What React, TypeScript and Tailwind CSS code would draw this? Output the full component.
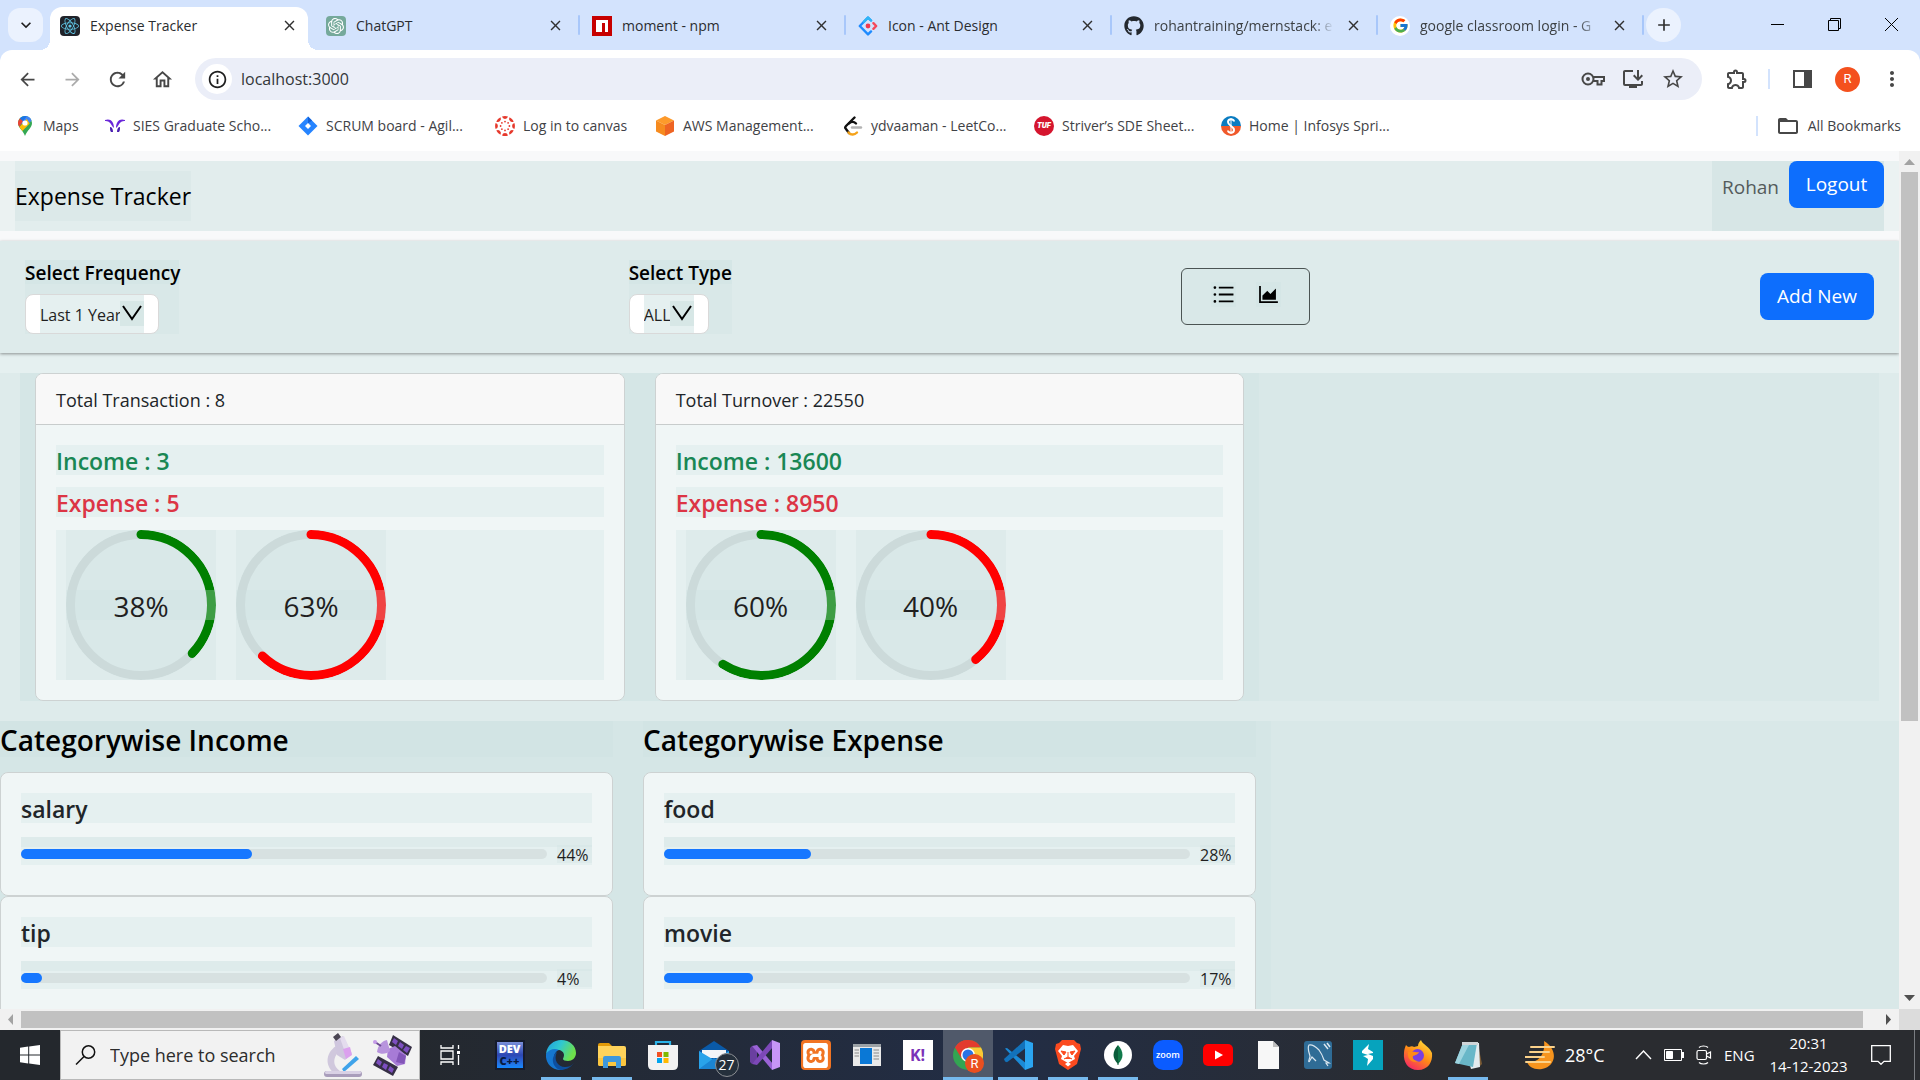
import React from "react";
import { AiOutlineUnorderedList, AiOutlineAreaChart } from "react-icons/ai";
import { FaReact, FaGithub } from "react-icons/fa";
import { FcGoogle } from "react-icons/fc";
import { SiOpenai, SiXampp } from "react-icons/si";
import {
  MdArrowBack,
  MdArrowForward,
  MdRefresh,
  MdOutlineHome,
  MdInfoOutline,
  MdStarBorder,
  MdOutlineExtension,
  MdMoreVert,
  MdFolderOpen,
  MdClose,
  MdAdd,
  MdKeyboardArrowDown,
  MdInstallDesktop,
} from "react-icons/md";

const tint = "bg-[rgba(204,226,225,0.3)]";

/* ---------- Browser icons ---------- */

function OpenAiIcon() {
  return (
    <span className="flex size-5 items-center justify-center rounded bg-[#75a99b] text-white">
      <SiOpenai size={16} />
    </span>
  );
}

function ReactIcon() {
  return (
    <span className="flex size-5 items-center justify-center rounded-sm bg-[#20232a] text-[#61c8e8]">
      <FaReact size={18} />
    </span>
  );
}

function NpmIcon() {
  return (
    <svg className="size-5" viewBox="0 0 20 20">
      <rect width="20" height="20" fill="#c70000" />
      <path d="M4 4h12v12h-3V7h-3v9H4z" fill="#fff" />
    </svg>
  );
}

function AntIcon() {
  return (
    <svg className="size-5" viewBox="0 0 20 20" fill="none" strokeWidth="2.4" strokeLinejoin="round" strokeLinecap="round">
      <path d="M13 4.5 10 1.6 1.8 10 10 18.4l3-3" stroke="#1e8bff" />
      <path d="M13 4.5 10 1.6 6 5.7" stroke="#2fb6f6" />
      <path d="m15.4 7.2 2.8 2.8-2.8 2.8" stroke="#f5485a" />
      <circle cx="10" cy="10" r="2.4" fill="#f0384f" />
    </svg>
  );
}

function GoogleIcon() {
  return (
    <span className="flex size-5 items-center justify-center rounded-full bg-white">
      <FcGoogle size={17} />
    </span>
  );
}

function MapsIcon() {
  return (
    <svg className="h-5 w-3.5" viewBox="0 0 14 20">
      <path d="M7 0a7 7 0 0 1 7 7c0 5-5 7-7 13C5 14 0 12 0 7a7 7 0 0 1 7-7z" fill="#34a853" />
      <path d="M7 0a7 7 0 0 1 6.5 4.4L7 12 1.6 5.2 7 0z" fill="#4285f4" />
      <path d="M2 2.3 5 5 1.4 11A7 7 0 0 1 2 2.3z" fill="#ea4335" />
      <path d="m1.4 11 7.3-8 3 4.6L4.4 15z" fill="#fbbc04" />
      <path d="M7 0C4.8 0 3 1 1.8 2.4L5 5l3.8-4.700z" fill="#1a73e8" />
      <circle cx="7" cy="7" r="2.6" fill="#fff" />
    </svg>
  );
}

function SiesIcon() {
  return (
    <svg className="h-4 w-5" viewBox="0 0 20 16" stroke="none" fill="#6a27d9">
      <path d="M0 2c5-2 9 1 9 8-2-1-3-5-5-6C3 3 1 3 0 3z" />
      <path d="M20 2c-5-2-9 1-9 8 2-1 3-5 5-6 1-1 3-1 4-1z" />
      <path d="M5 9c2 0 3 2 3 5H6c-1-1-1-3-1-5zM15 9c-2 0-3 2-3 5h2c1-1 1-3 1-5z" fill="#4a1fb0" />
    </svg>
  );
}

function JiraIcon() {
  return (
    <svg className="size-5" viewBox="0 0 20 20">
      <path d="m10 .5 9.5 9.5-9.5 9.5L.5 10z" fill="#2684ff" />
      <path d="m10 .5 4 4-4 3z" fill="#1560d4" />
      <path d="m10 7 3 3-3 3-3-3z" fill="#fff" />
    </svg>
  );
}

function CanvasIcon() {
  const spokes = [0, 45, 90, 135, 180, 225, 270, 315];
  return (
    <svg className="size-5" viewBox="0 0 20 20">
      {spokes.map((a) => (
        <g key={a} transform={`rotate(${a} 10 10)`} fill="#e6392c">
          <path d="M7 .6a9.500 9.500 0 0 1 6 0A3.100 3.100 0 0 1 7 .6z" />
          <circle cx="10" cy="5.600" r=".9" />
        </g>
      ))}
    </svg>
  );
}

function AwsIcon() {
  return (
    <svg className="size-5" viewBox="0 0 20 20">
      <path d="m10 0 9 4.500-9 4.500-9-4.500z" fill="#fd9a2b" />
      <path d="M1 4.500 10 9v11l-9-4.500z" fill="#f68b1f" />
      <path d="M19 4.500 10 9v11l9-4.500z" fill="#ee6423" />
    </svg>
  );
}

function LeetIcon() {
  return (
    <svg className="size-5" viewBox="0 0 20 20" fill="none" strokeWidth="2.400" strokeLinecap="round">
      <path d="M11.500 1.500 3 10c-1 1-1 2 0 3l3 4" stroke="#111" />
      <path d="M5.500 16.500c2.500 3 6 2.500 8.500 0" stroke="#f5a31a" />
      <path d="M6 7.500c2-2 5-2 7 0" stroke="#111" />
      <path d="M9 11.500h9" stroke="#b3b3b3" />
    </svg>
  );
}

function TufIcon() {
  return (
    <span className="flex size-5 items-center justify-center rounded-full bg-[#d5152e] font-['Inter'] text-[7px] font-black italic text-white">
      TUF
    </span>
  );
}

function InfosysIcon() {
  return (
    <svg className="size-5" viewBox="0 0 20 20" fill="none">
      <path d="M0 10a10 10 0 0 1 20 0z" fill="#0a7cc1" />
      <path d="M0 10a10 10 0 0 0 20 0z" fill="#f0592b" />
      <path d="M13 5.500c0-3-6-3-6 .5 0 4 6 4 6 8 0 3.500-6 3.500-6 .5" stroke="#fff" strokeWidth="2" />
      <path d="M10 2v16" stroke="#fff" strokeWidth="1" />
    </svg>
  );
}

/* ---------- Browser chrome ---------- */

const tabs = [
  { title: "Expense Tracker", icon: <ReactIcon />, active: true },
  { title: "ChatGPT", icon: <OpenAiIcon /> },
  { title: "moment - npm", icon: <NpmIcon /> },
  { title: "Icon - Ant Design", icon: <AntIcon /> },
  { title: "rohantraining/mernstack: e", icon: <FaGithub size={20} className="text-[#24292f]" />, fade: true },
  { title: "google classroom login - G", icon: <GoogleIcon />, fade: true },
];

function TabStrip() {
  return (
    <div className="flex h-[50px] items-end bg-[#d3e3fd]">
      <button aria-label="Search tabs" className="mr-[7px] mb-2 ml-2 flex h-[34px] w-[35px] shrink-0 items-center justify-center rounded-xl bg-[#ebf2fe]">
        <MdKeyboardArrowDown size={20} className="text-[#1f1f1f]" />
      </button>
      {tabs.map((t) => (
        <div key={t.title} className="flex h-[43px] w-[266px] shrink-0 items-start">
          <div
            className={
              t.active
                ? "relative flex h-full w-[258px] items-center rounded-t-xl bg-white pb-1.5 pl-2.5"
                : "flex h-full w-[258px] items-center pb-1.5 pl-2.5"
            }
          >
            {t.active && (
              <>
                <span className="absolute bottom-0 -left-2.5 size-2.5 bg-[radial-gradient(circle_at_0_0,transparent_10px,white_10px)]" />
                <span className="absolute -right-2.5 bottom-0 size-2.5 bg-[radial-gradient(circle_at_100%_0,transparent_10px,white_10px)]" />
              </>
            )}
            <span className="flex w-[30px] shrink-0">{t.icon}</span>
            <span
              className={
                t.fade
                  ? "w-[180px] whitespace-nowrap text-sm text-[#3c4043] [mask-image:linear-gradient(to_right,black_88%,transparent)]"
                  : "w-[180px] whitespace-nowrap text-sm text-[#2b2d30]"
              }
            >
              {t.title}
            </span>
            <button aria-label={`Close ${t.title}`} className="flex w-[38px] shrink-0 justify-center text-[#303030]">
              <MdClose size={17} />
            </button>
          </div>
          {!t.active && <span className="mt-2 ml-1 h-5 w-0.5 rounded bg-[#a8c7fa]" />}
        </div>
      ))}
      <button aria-label="New tab" className="mb-2 flex h-[34px] w-[35px] items-center justify-center rounded-full bg-[#ebf2fe] text-[#303030]">
        <MdAdd size={20} />
      </button>
      <div className="mb-[18px] ml-auto flex items-center gap-[42px] pr-[21px] text-black">
        <button aria-label="Minimize">
          <svg className="size-[15px]" viewBox="0 0 15 15" stroke="currentColor"><path d="M1 7.500h13" /></svg>
        </button>
        <button aria-label="Restore">
          <svg className="size-[15px]" viewBox="0 0 15 15" fill="none" stroke="currentColor">
            <path d="M1.500 3.500h10v10h-10zM3.500 3.500v-2h10v10h-2" />
          </svg>
        </button>
        <button aria-label="Close window">
          <svg className="size-[15px]" viewBox="0 0 15 15" stroke="currentColor"><path d="m1 1 13 13M14 1 1 14" /></svg>
        </button>
      </div>
    </div>
  );
}

function Toolbar() {
  return (
    <div className="flex h-[58px] items-center rounded-t-xl bg-white text-[#474747]">
      <div className="flex w-[195px] shrink-0 items-center pl-[17px]">
        <button aria-label="Back" className="w-[45px]"><MdArrowBack size={21} /></button>
        <button aria-label="Forward" className="w-11 text-[#ababab]"><MdArrowForward size={21} /></button>
        <button aria-label="Reload" className="w-[45px]"><MdRefresh size={23} /></button>
        <button aria-label="Home"><MdOutlineHome size={23} /></button>
      </div>
      <div className="flex h-[42px] flex-1 items-center rounded-full bg-[#ebeef8] pr-[17px] pl-[7px]">
        <span className="flex size-[30px] shrink-0 items-center justify-center rounded-full bg-white">
          <MdInfoOutline size={21} className="text-[#1f1f1f]" />
        </span>
        <input aria-label="Address" defaultValue="localhost:3000" className="ml-[9px] flex-1 bg-transparent text-base text-[#33363a] outline-none" />
        <div className="flex items-center gap-4">
          <svg className="h-[22px] w-6" viewBox="0 0 24 22" fill="none" stroke="currentColor" strokeWidth="2">
            <circle cx="7" cy="11" r="5.500" />
            <circle cx="7" cy="11" r="2" fill="currentColor" stroke="none" />
            <path d="M12 9h11v4h-2.500v3.500h-4V13H12" />
          </svg>
          <MdInstallDesktop size={24} />
          <MdStarBorder size={24} />
        </div>
      </div>
      <div className="flex w-[218px] shrink-0 items-center">
        <button aria-label="Extensions" className="ml-[23px]"><MdOutlineExtension size={24} /></button>
        <span className="ml-[19px] h-5 w-0.5 bg-[#d3e3fd]" />
        <svg className="ml-[23px] h-[18px] w-[19px]" viewBox="0 0 19 18">
          <path d="M1 1h17v16H1z" fill="none" stroke="currentColor" strokeWidth="2" />
          <path d="M11 1h7v16h-7z" fill="currentColor" />
        </svg>
        <span className="ml-[23px] flex size-[25px] items-center justify-center rounded-full bg-[#f4511e] font-['Roboto'] text-[13px] text-white">R</span>
        <button aria-label="Menu" className="ml-5"><MdMoreVert size={24} /></button>
      </div>
    </div>
  );
}

const bookmarks = [
  { label: "Maps", icon: <MapsIcon />, width: "w-[90px]" },
  { label: "SIES Graduate Scho...", icon: <SiesIcon />, width: "w-[193px]" },
  { label: "SCRUM board - Agil...", icon: <JiraIcon />, width: "w-[197px]" },
  { label: "Log in to canvas", icon: <CanvasIcon />, width: "w-[160px]" },
  { label: "AWS Management...", icon: <AwsIcon />, width: "w-[188px]" },
  { label: "ydvaaman - LeetCo...", icon: <LeetIcon />, width: "w-[191px]" },
  { label: "Striver’s SDE Sheet...", icon: <TufIcon />, width: "w-[187px]" },
  { label: "Home | Infosys Spri...", icon: <InfosysIcon />, width: "w-[188px]" },
];

function Bookmarks() {
  return (
    <nav className="flex h-[43px] items-center bg-white pb-2 pl-[15px] text-sm text-[#3f4246]">
      {bookmarks.map((b) => (
        <a key={b.label} href="#" className={`flex shrink-0 items-center gap-2 whitespace-nowrap ${b.width}`}>
          <span className="flex w-5 shrink-0 justify-center">{b.icon}</span>
          {b.label}
        </a>
      ))}
      <span className="ml-auto h-5 w-0.5 bg-[#d3e3fd]" />
      <a href="#" className="ml-[18px] flex items-center gap-2 pr-[19px] whitespace-nowrap">
        <MdFolderOpen size={24} className="text-[#474747]" />
        All Bookmarks
      </a>
    </nav>
  );
}

/* ---------- Expense tracker page ---------- */

function Header() {
  return (
    <header className="h-[90px] bg-[#f8f9fa] py-2.5">
      <div className={`h-full px-[15px] ${tint}`}>
        <div className={`flex h-full items-center justify-between ${tint}`}>
          <a href="#" className={`flex h-[50px] items-center pt-0.5 text-[23px] text-black ${tint}`}>
            Expense Tracker
          </a>
          <div className={`h-full ${tint}`}>
            <div className={`flex h-full items-start pl-2.5 text-[19px] ${tint}`}>
              <span className="mr-2.5 leading-[52px] text-[#545b5b]">Rohan</span>
              <button className="h-[47px] w-[95px] rounded-lg bg-[#0d6efd] text-white">Logout</button>
            </div>
          </div>
        </div>
      </div>
    </header>
  );
}

function Filter({ id, label, value, box, select }: { id: string; label: string; value: string; box: string; select: string }) {
  return (
    <div className={`h-[74px] ${tint} ${box}`}>
      <label htmlFor={id} className={`mb-2.5 block whitespace-nowrap pt-0.5 text-[19px] leading-[22px] font-semibold text-black ${tint}`}>
        {label}
      </label>
      <div className={`relative h-10 rounded-lg border border-[#d9d9d9] bg-white px-3.5 ${select}`}>
        <select id={id} defaultValue={value} className="block h-full w-full appearance-none bg-[#e5f0f0] pt-0.5 text-base text-[#1f1f1f] outline-none">
          <option>{value}</option>
        </select>
        <svg className="pointer-events-none absolute top-1.5 right-3.5 h-[25px] w-6 bg-[#d7e7e6]" viewBox="0 0 24 25" fill="none" stroke="#000" strokeWidth="2">
          <path d="m3 5 9 13 9-13" />
        </svg>
      </div>
    </div>
  );
}

function Filters() {
  return (
    <section className={`flex h-28 items-start justify-between px-[25px] pt-[19px] shadow-[0_1px_3px_rgba(0,0,0,0.4)] ${tint}`}>
      <Filter id="frequency" label="Select Frequency" value="Last 1 Year" box="w-[154px]" select="w-[134px]" />
      <Filter id="type" label="Select Type" value="ALL" box="w-[103px]" select="w-20" />
      <div className={`mt-2 flex h-[57px] w-[129px] items-center justify-center gap-5 rounded-md border border-[#4b5453] pb-1 text-black ${tint}`}>
        <button aria-label="Table view" className={tint}><AiOutlineUnorderedList size={25} /></button>
        <button aria-label="Chart view" className={tint}><AiOutlineAreaChart size={25} /></button>
      </div>
      <button className="mt-[13px] h-[47px] w-[114px] rounded-lg bg-[#0d6efd] text-[19px] text-white">Add New</button>
    </section>
  );
}

function Ring({ percent, color }: { percent: number; color: string }) {
  const c = 2 * Math.PI * 47;
  return (
    <div className={`relative size-[150px] ${tint}`}>
      <svg className={`size-full rounded-full ${tint}`} viewBox="0 0 100 100" fill="none" strokeWidth="6">
        <circle cx="50" cy="50" r="47" stroke="rgba(0,0,0,0.06)" />
        <circle
          cx="50"
          cy="50"
          r="47"
          stroke={color}
          strokeLinecap="round"
          strokeDasharray={`${((percent - 1) / 100) * c} ${c}`}
          transform="rotate(-90 50 50)"
        />
      </svg>
      <span className={`absolute inset-x-0 top-[60px] pt-0.5 text-center text-[28px] leading-7 text-[#1f1f1f] ${tint}`}>{percent}%</span>
    </div>
  );
}

function SummaryCard({ title, income, expense, up, down }: { title: string; income: number; expense: number; up: number; down: number }) {
  return (
    <div className={`px-[15px] ${tint}`}>
      <div className="overflow-hidden rounded-lg border border-[#cdd2d2] bg-white">
        <div className="border-b border-[#c8cccc] bg-[#f8f8f8] px-5 pt-3 pb-2.5 leading-7 text-[#212529]">{title}</div>
        <div className={`p-5 ${tint}`}>
          <h5 className={`mb-3 pt-0.5 text-[23px] leading-7 font-semibold text-[#198754] ${tint}`}>Income : {income}</h5>
          <h5 className={`mb-[13px] pt-0.5 text-[23px] leading-7 font-semibold text-[#dc3545] ${tint}`}>Expense : {expense}</h5>
          <div className={`flex gap-5 px-2.5 ${tint}`}>
            <Ring percent={up} color="green" />
            <Ring percent={down} color="red" />
          </div>
        </div>
      </div>
    </div>
  );
}

function CategoryColumn({ title, items }: { title: string; items: { name: string; percent: number }[] }) {
  return (
    <div className={`px-[15px] ${tint}`}>
      <h4 className={`mb-[15px] pt-0.5 text-[28px] leading-[34px] font-semibold text-black ${tint}`}>{title}</h4>
      {items.map((item) => (
        <div key={item.name} className="overflow-hidden rounded-lg border border-[#cdd2d2] bg-white">
          <div className={`px-5 pt-5 pb-[30px] ${tint}`}>
            <h5 className={`mb-3.5 pt-0.5 text-[23px] leading-7 font-semibold text-[#212529] ${tint}`}>{item.name}</h5>
            <div className={`h-7 ${tint}`}>
              <div className={`h-2.5 ${tint}`} />
              <div className="flex h-3.5 items-center gap-2.5">
                <div className="h-2.5 flex-1 rounded-full bg-black/6">
                  <div className="h-full rounded-full bg-[#1677ff]" style={{ width: `${item.percent}%` }} />
                </div>
                <span className={`w-[35px] pt-0.5 text-base leading-4 text-[#1f1f1f] ${tint}`}>{item.percent}%</span>
              </div>
            </div>
          </div>
        </div>
      ))}
    </div>
  );
}

function Dashboard() {
  return (
    <main className="min-w-0 flex-1 overflow-hidden bg-white text-lg">
      <Header />
      <div className={`h-full ${tint}`}>
        <div className={`h-full ${tint}`}>
          <Filters />
          <div className={`mt-5 h-full ${tint}`}>
            <div className={`mx-5 grid grid-cols-3 ${tint}`}>
              <SummaryCard title="Total Transaction : 8" income={3} expense={5} up={38} down={63} />
              <SummaryCard title="Total Turnover : 22550" income={13600} expense={8950} up={60} down={40} />
            </div>
            <div className={`-mx-[15px] mt-5 grid grid-cols-3 ${tint}`}>
              <CategoryColumn title="Categorywise Income" items={[{ name: "salary", percent: 44 }, { name: "tip", percent: 4 }]} />
              <CategoryColumn title="Categorywise Expense" items={[{ name: "food", percent: 28 }, { name: "movie", percent: 17 }]} />
            </div>
          </div>
        </div>
      </div>
    </main>
  );
}

function VerticalScrollbar() {
  return (
    <div className="flex w-[21px] shrink-0 flex-col items-center bg-[#f1f1f1]">
      <svg className="h-[21px] w-[21px] shrink-0" viewBox="0 0 21 21"><path d="m5 14 5.500-6 5.500 6z" fill="#a3a3a3" /></svg>
      <div className="w-[17px] basis-[549px] bg-[#c1c1c1]" />
      <svg className="mt-auto h-[21px] w-[21px] shrink-0" viewBox="0 0 21 21"><path d="m5 7 5.500 6L16 7z" fill="#505050" /></svg>
    </div>
  );
}

function HorizontalScrollbar() {
  return (
    <div className="flex h-[21px] shrink-0 items-center bg-[#f1f1f1]">
      <svg className="h-[21px] w-[21px] shrink-0" viewBox="0 0 21 21"><path d="m13 5-5 5.500 5 5.500z" fill="#a3a3a3" /></svg>
      <div className="h-[17px] flex-1 bg-[#c1c1c1]" />
      <svg className="ml-[15px] h-[21px] w-[21px] shrink-0" viewBox="0 0 21 21"><path d="m8 5 5 5.500L8 16z" fill="#505050" /></svg>
      <span className="h-full w-[21px] bg-[#dcdcdc]" />
    </div>
  );
}

/* ---------- Taskbar ---------- */

function Microscope() {
  return (
    <svg className="h-[46px] w-10 shrink-0" viewBox="0 0 40 46">
      <path d="M15 13C3 19 1 33 11 41h10C10 37 8 26 17 19z" fill="#d0c8dd" />
      <path d="m11 9 9-5 9 18-7 6-8-5z" fill="#cfc6de" />
      <path d="m17 6 4-2 8 18-5 4z" fill="#e4dcee" />
      <path d="m20 17 7-2 2 8-6 4z" fill="#dba0ee" />
      <path d="m10 5 5-4 3 4-5 4z" fill="#4b4653" />
      <path d="m19 37 14-13 3 3-15 13z" fill="#3fa3ea" />
      <rect x="1" y="39" width="38" height="6" rx="3" fill="#a99dbb" />
      <rect x="2" y="39" width="36" height="3" rx="1.500" fill="#d9d1e5" />
    </svg>
  );
}

function Satellite() {
  return (
    <svg className="h-[42px] w-10 shrink-0" viewBox="0 0 40 42">
      <path d="m20 1 19 12-4 9-19-11z" fill="#362f45" />
      <path d="m5 22 20 11-5 9L0 31z" fill="#362f45" />
      <g fill="#7d4fc0">
        <path d="m21 4 4 3-2 4-4-3zM27 8l4 3-2 4-4-3zM33 12l4 2-3 5-4-3z" />
        <path d="m5 25 4 3-2 4-4-3zM11 29l4 2-2 5-4-3zM17 32l4 3-2 4-4-3z" />
      </g>
      <path d="m15 15 7-3 11 9-1 9-8 2-10-9z" fill="#a77bd6" />
      <path d="m26 18 7 4-2 8-8-2z" fill="#8356b8" />
      <path d="M4 18C5 11 9 7 14 6l3 11c-3 3-9 4-13 1z" fill="#b894dd" />
      <path d="m8 12-6-4" stroke="#6b4b91" strokeWidth="2" />
      <circle cx="2" cy="8" r="2" fill="#c59be8" />
    </svg>
  );
}

function DevCpp() {
  return (
    <span className="flex h-[30px] w-[30px] flex-col items-center justify-center border-2 border-[#151b2d] bg-linear-to-b from-[#7b8fd9] via-[#2d47b4] to-[#1289ff] text-[11px] leading-3 font-extrabold text-white">
      <span>DEV</span>
      <span className="text-[#071a40]">C++</span>
    </span>
  );
}

function Edge() {
  return (
    <svg className="size-[30px]" viewBox="0 0 30 30">
      <defs>
        <linearGradient id="edgeTop" x1="0" y1="0" x2="1" y2=".4">
          <stop offset="0" stopColor="#1f9be0" />
          <stop offset=".5" stopColor="#30c8d0" />
          <stop offset="1" stopColor="#6ee04a" />
        </linearGradient>
      </defs>
      <path d="M0 14C1 5 8 0 15 0c9 0 15 6 15 13 0 5-4 8-8 8-3 0-5-1-5-2 0-1 1-2 1-4 0-3-3-5-6-5-5 0-9 2-12 4z" fill="url(#edgeTop)" />
      <path d="M0 14c3-5 9-6 13-4-3 1-5 4-5 8 0 6 4 11 9 12C7 31-1 24 0 14z" fill="#1577cf" />
      <path d="M11 12c-4 8 1 15 8 15 4 0 6-1 9-4-4 5-9 7-13 7-6-1-9-7-8-12 1-3 2-5 4-6z" fill="#0d4f9e" />
    </svg>
  );
}

function Folder() {
  return (
    <svg className="h-[25px] w-7" viewBox="0 0 28 25">
      <path d="M0 2q0-2 2-2h9l3 3H0z" fill="#e29a08" />
      <path d="M0 3h26q2 0 2 2v16q0 2-2 2H2q-2 0-2-2z" fill="#ffd35b" />
      <path d="M0 15h28v6q0 2-2 2H2q-2 0-2-2z" fill="#fbc63f" />
      <path d="M5 25V15q0-2 2-2h14q2 0 2 2v10h-5v-6h-8v6z" fill="#3f98dc" />
    </svg>
  );
}

function Store() {
  return (
    <svg className="h-[30px] w-[30px]" viewBox="0 0 30 30">
      <path d="M8 7V2h14v5" fill="none" stroke="#2bb3e8" strokeWidth="2.200" />
      <path d="M0 5h30v20q0 5-5 5H5q-5 0-5-5z" fill="#f2f2f2" />
      <path d="M9 12h5v5H9z" fill="#f25022" /><path d="M15.500 12h5v5h-5z" fill="#7fba00" />
      <path d="M9 18h5v5H9z" fill="#00a4ef" /><path d="M15.500 18h5v5h-5z" fill="#ffb900" />
    </svg>
  );
}

function Mail() {
  return (
    <span className="relative">
      <svg className="h-7 w-[30px]" viewBox="0 0 30 28">
        <path d="M0 10 15 0l15 10v18H0z" fill="#0a5aa8" />
        <path d="M3 9h24v8H3z" fill="#f4f6f8" />
        <path d="m0 10 15 9 15-9v18H0z" fill="#29a3ea" />
        <path d="m0 28 15-11 15 11z" fill="#1b85d3" />
      </svg>
      <span className="absolute top-3 left-4 flex size-6 items-center justify-center rounded-full border border-[#8c8f94] bg-[#25303c] text-sm text-white">27</span>
    </span>
  );
}

function VisualStudio() {
  return (
    <svg className="size-[30px]" viewBox="0 0 30 30">
      <path d="M2 6 0 8v14l2 2 5-4V10z" fill="#6a3fa0" />
      <path d="M2 6 7 5l16 19-1 6z" fill="#9a63d6" />
      <path d="m2 24 5 1L23 7l-1-7z" fill="#7c48b8" />
      <path d="m22 0 8 3v24l-8 3z" fill="#c795f7" />
    </svg>
  );
}

function VsCode() {
  return (
    <svg className="size-[30px]" viewBox="0 0 30 30">
      <path d="M2 8.500 4 8l20 16-2 6z" fill="#1b8ad6" />
      <path d="m2 21.500 2 .8L24 7l-2-7L1 19z" fill="#1272bb" />
      <path d="m22 0 8 3v24l-8 3z" fill="#2ba5f0" />
    </svg>
  );
}

function Xampp() {
  return (
    <span className="flex size-[30px] items-center justify-center rounded bg-[#f17423] text-white">
      <SiXampp size={25} />
    </span>
  );
}

function NewsWindow() {
  return (
    <svg className="h-[22px] w-7" viewBox="0 0 28 22">
      <path d="M0 0h28v22H0z" fill="#e9e9e9" />
      <path d="M0 0h28v3H0z" fill="#9ba1a6" />
      <path d="M7 4h12v16H7z" fill="#0a78d6" />
      <path d="M1.500 6H6M1.500 9H6M1.500 12H6M20.500 6H26M20.500 9H26M20.500 12H26M20.500 15H26" stroke="#8a8a8a" />
    </svg>
  );
}

function Kahoot() {
  return <span className="flex size-[30px] items-center justify-center bg-white text-base font-bold text-[#7b32b8]">K!</span>;
}

function Chrome() {
  return (
    <span className="relative">
      <svg className="size-[30px]" viewBox="0 0 30 30">
        <circle cx="15" cy="15" r="15" fill="#33a552" />
        <path d="M2 7.500A15 15 0 0 1 28 7.500H15z" fill="#e33b2e" />
        <path d="M2 7.500A15 15 0 0 1 15 0v8.500L8.500 18.500z" fill="#e33b2e" />
        <path d="M28 7.500A15 15 0 0 1 15 30l6.500-11L15 7.500z" fill="#fcc934" />
        <circle cx="15" cy="15" r="7" fill="#fff" />
        <circle cx="15" cy="15" r="5.500" fill="#2a72e5" />
      </svg>
      <span className="absolute top-3.5 left-3 flex size-[19px] items-center justify-center rounded-full bg-[#ea4f1f] font-['Roboto'] text-[13px] text-white">R</span>
    </span>
  );
}

function Mongo() {
  return (
    <svg className="size-7" viewBox="0 0 28 28">
      <circle cx="14" cy="14" r="14" fill="#fff" />
      <path d="M14 4c6 7 6 13 0 19z" fill="#117a4b" /><path d="M14 4C8 11 8 17 14 23z" fill="#0a5c3a" />
      <path d="M14 20v4" stroke="#0a5c3a" />
    </svg>
  );
}

function Zoom() {
  return <span className="flex size-[30px] items-center justify-center rounded-[10px] bg-[#0b5cff] pb-px text-[9px] font-semibold text-white">zoom</span>;
}

function YouTube() {
  return (
    <svg className="h-[22px] w-[30px]" viewBox="0 0 30 22">
      <rect width="30" height="22" rx="5" fill="#f00" />
      <path d="m12 6.500 8 4.500-8 4.500z" fill="#fff" />
    </svg>
  );
}

function Brave() {
  return (
    <svg className="h-[30px] w-[26px]" viewBox="0 0 26 30">
      <path d="m7 0h12l3 3 3 1 1 5-4 15-9 6-9-6L0 9l1-5 3-1z" fill="#fb4a1f" />
      <path d="m8 5 5 1 5-1 5 6-4 5 1 3-7 4-7-4 1-3-4-5z" fill="#fff" />
      <path d="m6 11 5 1-2 3zM20 11l-5 1 2 3zM13 12v5M9 19l4-2 4 2" fill="#fb4a1f" stroke="#fb4a1f" />
      <path d="m10 24 3-2 3 2-3 2.500z" fill="#fff" />
    </svg>
  );
}

function FileIcon() {
  return (
    <svg className="h-7 w-[21px]" viewBox="0 0 21 28">
      <path d="M0 0h15l6 6v22H0z" fill="#f7f7f7" /><path d="M15 0v6h6z" fill="#bdbdbd" />
    </svg>
  );
}

function MySql() {
  return (
    <svg className="size-7" viewBox="0 0 28 28" fill="none">
      <rect width="28" height="28" rx="3" fill="#2f6c96" />
      <path d="M5 21c-1-2 1-3 1-6-1-4-3-8-1-11 4-1 7 2 10 5 3 4 4 7 5 10l5 3-3 0 2 3" stroke="#dbe7f0" strokeWidth="1.200" />
      <path d="m5 21 3-5 4 4" stroke="#dbe7f0" strokeWidth="1.200" />
      <path d="m20 3 4 5M23 2l3 4" stroke="#dbe7f0" strokeWidth="1.500" />
    </svg>
  );
}

function Bolt() {
  return (
    <svg className="size-[30px]" viewBox="0 0 30 30">
      <path d="M0 0h30v30H0z" fill="#06a3bd" />
      <path d="M16 4 9 11v2l6 2-5 1 2 1 3 2-1 7 6-7v-3l-5-2 5-1v-1l-5-3z" fill="#fff" />
    </svg>
  );
}

function Firefox() {
  return (
    <svg className="size-[30px]" viewBox="0 0 30 30">
      <defs>
        <linearGradient id="fox" x1=".8" y1="0" x2=".2" y2="1">
          <stop offset="0" stopColor="#ffe03a" />
          <stop offset=".5" stopColor="#ff8a16" />
          <stop offset="1" stopColor="#f5216b" />
        </linearGradient>
      </defs>
      <path d="M3 5c1 1 2 2 3 2 2-1 4-1 5 0l4-1c0-2 1-4 3-6 1 4 9 7 11 13 1 9-4 17-14 17S0 22 1 13c0-3 1-6 2-8z" fill="url(#fox)" />
      <circle cx="14.500" cy="15.500" r="6.500" fill="#7a3fe0" />
      <path d="M5 12c4-2 6 1 11 0-1 3-4 3-6 4-1 3 2 5 6 5-6 3-12-1-11-9z" fill="#ff8a16" />
    </svg>
  );
}

function Notepad() {
  return (
    <svg className="size-[30px]" viewBox="0 0 30 30">
      <path d="m25 4 4 20-3 3-6-20z" fill="#7a5a34" />
      <path d="m10 2 16 1 1 24-9 2z" fill="#e3ebee" />
      <path d="M10 3h14l-4 24-18-4z" fill="#69b7c8" />
      <path d="M10 3h7L6 24l-4-1z" fill="#9ed4df" />
      <path d="M9 2h16v3H9z" fill="#cfd5d8" />
    </svg>
  );
}

const apps: { name: string; icon: React.ReactNode; state?: "open" | "active" }[] = [
  { name: "Dev-C++", icon: <DevCpp /> },
  { name: "Edge", icon: <Edge />, state: "open" },
  { name: "File Explorer", icon: <Folder />, state: "open" },
  { name: "Store", icon: <Store /> },
  { name: "Mail", icon: <Mail /> },
  { name: "Visual Studio", icon: <VisualStudio /> },
  { name: "XAMPP", icon: <Xampp /> },
  { name: "News", icon: <NewsWindow /> },
  { name: "Kahoot", icon: <Kahoot /> },
  { name: "Chrome", icon: <Chrome />, state: "active" },
  { name: "VS Code", icon: <VsCode />, state: "open" },
  { name: "Brave", icon: <Brave />, state: "open" },
  { name: "MongoDB", icon: <Mongo />, state: "open" },
  { name: "Zoom", icon: <Zoom /> },
  { name: "YouTube", icon: <YouTube /> },
  { name: "Document", icon: <FileIcon /> },
  { name: "MySQL Workbench", icon: <MySql /> },
  { name: "API client", icon: <Bolt /> },
  { name: "Firefox", icon: <Firefox /> },
  { name: "Notepad", icon: <Notepad />, state: "open" },
];

function AppButton({ app, width }: { app: (typeof apps)[number]; width: string }) {
  if (app.state === "active") {
    return (
      <button aria-label={app.name} className={`flex items-center justify-center border-b-3 border-[#76b9ed] bg-[#50596a] pt-[3px] ${width}`}>
        {app.icon}
      </button>
    );
  }
  return (
    <button aria-label={app.name} className={`flex flex-col items-center justify-center ${width}`}>
      {app.state === "open" ? (
        <>
          <span className="flex flex-1 items-center pt-[3px]">{app.icon}</span>
          <span className="h-[3px] w-10 bg-[#76b9ed]" />
        </>
      ) : (
        app.icon
      )}
    </button>
  );
}

function Taskbar() {
  return (
    <footer className="flex h-[50px] shrink-0 items-stretch bg-linear-to-r from-[#24282d] from-20% via-[#222d45] via-52% to-[#2a2c30] to-75% text-white">
      <button aria-label="Start" className="flex w-[60px] shrink-0 items-center justify-center">
        <svg className="size-5" viewBox="0 0 20 20" fill="#fff">
          <path d="M0 2.800 8.200 1.600v8H0zM9.200 1.400 20 0v9.600H9.200zM0 10.400h8.200v8L0 17.200zM9.200 10.400H20V20L9.200 18.500z" />
        </svg>
      </button>
      <label className="flex w-[360px] shrink-0 items-center border border-[#b9b9b9] bg-[#f2f2f2] pr-1.5 pl-3.5">
        <svg className="h-5 w-[21px] shrink-0" viewBox="0 0 21 20" fill="none" stroke="#111" strokeWidth="1.500">
          <circle cx="13.500" cy="7" r="6.200" /><path d="M9 11.500 1 19.500" />
        </svg>
        <input aria-label="Search" placeholder="Type here to search" className="ml-3.5 min-w-0 flex-1 bg-transparent text-lg outline-none placeholder:text-[#2c2c2c]" />
        <Microscope />
        <span className="w-2.5" />
        <Satellite />
      </label>
      <button aria-label="Task view" className="flex w-16 shrink-0 items-center justify-center pr-1">
        <svg className="size-5" viewBox="0 0 20 20" fill="none" stroke="#fff" strokeWidth="1.300">
          <path d="M1 0v3h12V0M1 6h12v8H1zM1 20v-3h12v3M18.500 0v4M18.500 10v10" /><path d="M18.500 6v3" strokeWidth="3" />
        </svg>
      </button>
      <div className="flex flex-1">
        {apps.map((a, i) => (
          <AppButton key={a.name} app={a} width={i < 9 ? "w-[51px]" : "w-[50px]"} />
        ))}
      </div>
      <div className="flex w-[427px] shrink-0 items-center pl-8">
        <svg className="h-[30px] w-[30px] shrink-0" viewBox="0 0 30 30">
          <path d="M19 1c14 8 13 25-2 28C9 30 4 27 2 22c9 2 19-6 17-21z" fill="#f7941d" />
          <path d="M6 7h23M5 12h19M0 17h19M1 22h24" stroke="#fbd28a" strokeWidth="2" strokeLinecap="round" />
        </svg>
        <span className="w-20 pl-2.5 text-lg">28°C</span>
        <svg className="h-[10px] w-[17px] shrink-0" viewBox="0 0 17 10" fill="none" stroke="#fff" strokeWidth="1.400"><path d="m1 9 7.500-8L16 9" /></svg>
        <svg className="ml-3 h-3 w-5 shrink-0" viewBox="0 0 20 12" fill="none" stroke="#fff"><path d="M.5.5h17v11H.5z" /><path d="M2.500 2.500h6v7h-6z" fill="#fff" /><path d="M19 3v6" strokeWidth="2" /></svg>
        <svg className="ml-3 h-5 w-4 shrink-0" viewBox="0 0 16 20" fill="none" stroke="#fff" strokeWidth="1.200"><rect x="1" y="5.500" width="9.500" height="9" rx="1.500" /><path d="m10.500 9 4-2v6l-4-2M3 2.500c2-2 7-2 9 0M3 17.500c2 2 7 2 9 0" /></svg>
        <span className="ml-3 text-[15px]">ENG</span>
        <div className="mx-3 w-[84px] text-center text-[15px] leading-[23px]">
          <div>20:31</div>
          <div>14-12-2023</div>
        </div>
        <svg className="ml-2 size-5 shrink-0" viewBox="0 0 20 20" fill="none" stroke="#fff" strokeWidth="1.300"><path d="M.7.7h18.600v15.600H13l-3 3-3-3H.7z" /></svg>
        <span className="mr-[5px] ml-auto h-full w-px bg-[#7a7d82]" />
      </div>
    </footer>
  );
}

export default function App() {
  return (
    <div className="flex h-screen flex-col overflow-hidden bg-[#d3e3fd] font-['Open_Sans','Noto_Sans',sans-serif]">
      <TabStrip />
      <Toolbar />
      <Bookmarks />
      <div className="flex min-h-0 flex-1">
        <Dashboard />
        <VerticalScrollbar />
      </div>
      <HorizontalScrollbar />
      <Taskbar />
    </div>
  );
}
